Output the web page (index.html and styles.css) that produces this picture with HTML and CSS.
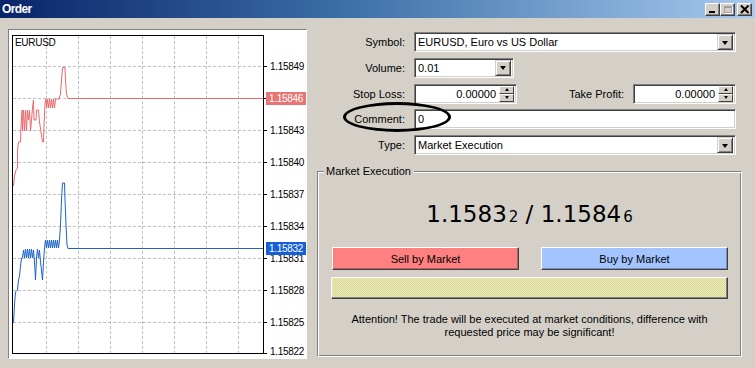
FILE: index.html
```html
<!DOCTYPE html>
<html>
<head>
<meta charset="utf-8">
<link rel="stylesheet" href="styles.css">
</head>
<body>
<div class="window">
  <div class="titlebar">
    <span class="title">Order</span>
    <div class="tb-buttons">
      <div class="tb-btn"><span class="min-glyph"></span></div>
      <div class="tb-btn"><span class="max-glyph"></span></div>
      <div class="tb-btn close"><svg width="10" height="9" viewBox="0 0 10 9"><path d="M1 0.5 L8.5 8 M8.5 0.5 L1 8" stroke="#000" stroke-width="2"/></svg></div>
    </div>
  </div>
  <div class="main">
    <div class="chart-panel">
      <svg class="chart" width="297" height="328" viewBox="9 30 297 328">
        <rect x="9" y="30" width="297" height="328" fill="#fff"/>
        <g stroke="#c0c0c0" stroke-width="1" stroke-dasharray="3 2">
          <path d="M46.5 36 V354 M78.5 36 V354 M110.5 36 V354 M142.5 36 V354 M174.5 36 V354 M206.5 36 V354 M238.5 36 V354"/>
          <path d="M13 66.5 H263 M13 98.5 H263 M13 130.5 H263 M13 162.5 H263 M13 194.5 H263 M13 226.5 H263 M13 258.5 H263 M13 290.5 H263 M13 322.5 H263"/>
        </g>
        <g stroke="#000" stroke-width="1">
          <path d="M264 66.5 H267 M264 98.5 H267 M264 130.5 H267 M264 162.5 H267 M264 194.5 H267 M264 226.5 H267 M264 258.5 H267 M264 290.5 H267 M264 322.5 H267 M264 353.5 H267"/>
        </g>
        <path fill="none" stroke="#e86a6a" stroke-width="1"
          d="M13.5 186 L14.5 176 L16 170 L17.5 168 L17.5 150 L18.5 142 L20.5 142 L21 126 L22 110 L22.5 131 L23.5 110 L24.5 131 L25.5 110 L26.5 131 L27.5 110 L28.5 120 L29.5 110 L30.5 131 L31.5 120 L32.5 108 L33.5 100 L34 120 L36 120 L36.5 110 L38.5 110 L39.5 122 L41 132 L42.5 142 L43.5 142 L44 126 L45 104 L46 99 L46.5 108 L47.5 99 L48.5 108 L49.5 99 L50.5 108 L51.5 99 L52.5 108 L53.5 99 L54.5 108 L55.5 99 L59 99 L60.5 94 L61.5 80 L62.5 67.5 L65 67.5 L65.5 80 L66.5 94 L68 98.5 L263 98.5"/>
        <path fill="none" stroke="#1c64c8" stroke-width="1"
          d="M13.5 323 L14.5 305 L15.5 292 L17.5 290 L18.5 280 L19.5 276 L20.5 266 L21.5 258 L22.5 258 L23.5 250 L24.5 258 L25.5 249 L26.5 258 L27.5 249 L28.5 258 L29.5 249 L30.5 258 L31.5 249 L32.5 258 L33.5 250 L34.5 262 L35.5 280 L36.5 258 L37.5 249 L38.5 258 L39.5 250 L40.5 262 L41.5 270 L42.5 280 L43.5 262 L44.5 248 L45.5 240 L46.5 248 L47.5 240 L48.5 248 L49.5 240 L50.5 248 L51.5 240 L52.5 248 L53.5 240 L54.5 248 L55.5 240 L56.5 248 L57.5 240 L58.5 248 L59.5 240 L60.5 225 L61.5 200 L62.5 183 L64.5 183 L65 200 L66 225 L67 245 L68 248.5 L263 248.5"/>
        <rect x="12.5" y="35.5" width="251" height="318" fill="none" stroke="#000" stroke-width="1"/>
        <g class="axis" fill="#000">
          <text x="15" y="46">EURUSD</text>
          <text x="270" y="70">1.15849</text>
          <text x="270" y="134">1.15843</text>
          <text x="270" y="166">1.15840</text>
          <text x="270" y="198">1.15837</text>
          <text x="270" y="230">1.15834</text>
          <text x="270" y="262">1.15831</text>
          <text x="270" y="294">1.15828</text>
          <text x="270" y="326">1.15825</text>
          <text x="270" y="355">1.15822</text>
        </g>
        <rect x="266" y="92" width="40" height="13" fill="#e87474"/>
        <text class="axis" x="269" y="102" fill="#fff">1.15846</text>
        <rect x="266" y="242" width="40" height="13" fill="#1560d8"/>
        <text class="axis" x="269" y="252" fill="#fff">1.15832</text>
      </svg>
    </div>
    <div class="right">
      <div class="form">
        <span class="lbl">Symbol:</span>
        <div class="field select"><span class="val">EURUSD, Euro vs US Dollar</span><span class="dd"><i class="tri"></i></span></div>
        <span class="lbl">Volume:</span>
        <div class="field select vol"><span class="val">0.01</span><span class="dd"><i class="tri"></i></span></div>
        <span class="lbl">Stop Loss:</span>
        <div class="sl-row">
          <div class="field spin"><span class="val num">0.00000</span><span class="spinbtns"><span class="sb"><i class="tri up"></i></span><span class="sb"><i class="tri small"></i></span></span></div>
          <span class="lbl tp">Take Profit:</span>
          <div class="field spin"><span class="val num">0.00000</span><span class="spinbtns"><span class="sb"><i class="tri up"></i></span><span class="sb"><i class="tri small"></i></span></span></div>
        </div>
        <span class="lbl">Comment:</span>
        <div class="field text"><span class="val">0</span></div>
        <span class="lbl">Type:</span>
        <div class="field select"><span class="val">Market Execution</span><span class="dd"><i class="tri"></i></span></div>
      </div>
      <fieldset class="group">
        <legend>Market Execution</legend>
        <div class="price">1.1583<span class="small">2</span> / 1.1584<span class="small">6</span></div>
        <div class="btn-row">
          <div class="btn sell">Sell by Market</div>
          <div class="btn buy">Buy by Market</div>
        </div>
        <div class="yellow"></div>
        <p class="attention">Attention! The trade will be executed at market conditions, difference with<br>requested price may be significant!</p>
      </fieldset>
    </div>
  </div>
  <div class="oval"></div>
</div>
</body>
</html>
```

FILE: styles.css
```css
* { box-sizing: border-box; }
html, body { margin: 0; padding: 0; }
body {
  width: 755px;
  height: 368px;
  overflow: hidden;
  background: #d4d0c8;
  font-family: "Liberation Sans", Arial, sans-serif;
  font-size: 11px;
  color: #000;
}
.window { position: relative; width: 755px; height: 368px; }

.titlebar {
  height: 18px;
  display: flex;
  align-items: center;
  justify-content: space-between;
  background: linear-gradient(to right, #0a246a 0%, #3a6ea5 45%, #a6caf0 100%);
  padding: 0 3px 0 2px;
}
.title {
  color: #fff;
  font-weight: bold;
  font-size: 12px;
  letter-spacing: -0.6px;
}
.tb-buttons { display: flex; gap: 0; align-items: center; }
.tb-btn {
  width: 15px;
  height: 13px;
  background: #d4d0c8;
  border: 1px solid;
  border-color: #fff #404040 #404040 #fff;
  box-shadow: inset -1px -1px #808080;
  display: flex;
  align-items: center;
  justify-content: center;
  position: relative;
}
.tb-btn.close { margin-left: 2px; }
.min-glyph {
  width: 6px; height: 2px; background: #000;
  margin-top: 6px; margin-right: 2px;
}
.max-glyph {
  width: 8px; height: 7px;
  border: 1px solid #a0a0a0;
  border-top-width: 2px;
  box-shadow: 1px 1px #fff;
}

.main {
  display: flex;
  padding: 11px 0 0 8px;
}
.chart-panel {
  width: 299px;
  height: 330px;
  border: 1px solid;
  border-color: #808080 #fff #fff #808080;
  background: #fff;
}
.chart { display: block; }
.axis {
  font-family: "Liberation Sans", Arial, sans-serif;
  font-size: 10px;
  letter-spacing: -0.3px;
}

.right {
  width: 448px;
  display: flex;
  flex-direction: column;
  padding-top: 3px;
}
.form {
  display: grid;
  grid-template-columns: 98px 322px;
  grid-auto-rows: 20px;
  column-gap: 9px;
  row-gap: 5.75px;
}
.lbl {
  display: flex;
  align-items: center;
  justify-content: flex-end;
  color: #000;
}
.field {
  height: 20px;
  background: #fff;
  border: 1px solid;
  border-color: #808080 #fff #fff #808080;
  box-shadow: inset 1px 1px #404040, inset -1px -1px #d4d0c8;
  display: flex;
  align-items: center;
  padding: 0 2px 0 3px;
}
.val { flex: 1; white-space: nowrap; }
.val.num { text-align: right; padding-right: 3px; }
.field.vol { width: 100px; }
.dd {
  width: 16px;
  height: 16px;
  background: #d4d0c8;
  border: 1px solid;
  border-color: #d4d0c8 #404040 #404040 #d4d0c8;
  box-shadow: inset 1px 1px #fff, inset -1px -1px #808080;
  display: flex;
  align-items: center;
  justify-content: center;
}
.tri {
  width: 0; height: 0;
  border-left: 3.5px solid transparent;
  border-right: 3.5px solid transparent;
  border-top: 4px solid #000;
  margin-top: 1px;
}
.tri.up {
  border-top: 0;
  border-bottom: 3px solid #000;
  border-left-width: 2.5px;
  border-right-width: 2.5px;
  margin-top: 0;
}
.tri.small {
  border-top-width: 3px;
  border-left-width: 2.5px;
  border-right-width: 2.5px;
  margin-top: 0;
}
.sl-row {
  display: flex;
  align-items: center;
}
.field.spin { width: 103px; padding-right: 2px; }
.spinbtns {
  display: flex;
  flex-direction: column;
  width: 15px;
  height: 16px;
}
.sb {
  flex: 1;
  background: #d4d0c8;
  border: 1px solid;
  border-color: #fff #404040 #404040 #fff;
  display: flex;
  align-items: center;
  justify-content: center;
}
.lbl.tp { flex: 1; height: 20px; padding-right: 9px; }

.group {
  margin: 10px 0 0 10px;
  width: 425px;
  height: 192px;
  padding: 0;
  border: 1px solid;
  border-color: #808080 #fff #fff #808080;
  box-shadow: inset 1px 1px #fff, inset -1px -1px #808080;
  min-width: 0;
}
.group legend {
  margin-left: 6px;
  padding: 0 3px 0 2px;
  line-height: 13px;
  background: #d4d0c8;
}
.price {
  font-family: "DejaVu Sans", sans-serif;
  font-size: 23px;
  line-height: 28px;
  text-align: center;
  margin-top: 22px;
  margin-bottom: -1px;
}
.price .small { font-size: 15px; margin-left: 2px; }
.btn-row {
  display: flex;
  gap: 22px;
  padding-left: 14px;
  margin-top: 17px;
}
.btn {
  width: 187px;
  height: 23px;
  display: flex;
  align-items: center;
  justify-content: center;
  border: 1px solid;
  border-color: #fff #404040 #404040 #fff;
}
.sell { background: #ff8080; box-shadow: inset -1px -1px #b85c5c; }
.buy { background: #a4c4ff; box-shadow: inset -1px -1px #7890c0; }
.yellow {
  margin: 7px 0 0 13px;
  width: 397px;
  height: 22px;
  border: 1px solid;
  border-color: #fff #404040 #404040 #fff;
  box-shadow: inset -1px -1px #808080;
  background-color: #e4e4a8;
  background-image: repeating-conic-gradient(#ececb8 0 25%, #d8d898 0 50%);
  background-size: 2px 2px;
}
.attention {
  margin: 14px 0 0 0;
  text-align: center;
  line-height: 13px;
}

.oval {
  position: absolute;
  left: 343px;
  top: 102px;
  width: 108px;
  height: 30px;
  border: 3.5px solid #000;
  border-radius: 50%;
}
```
